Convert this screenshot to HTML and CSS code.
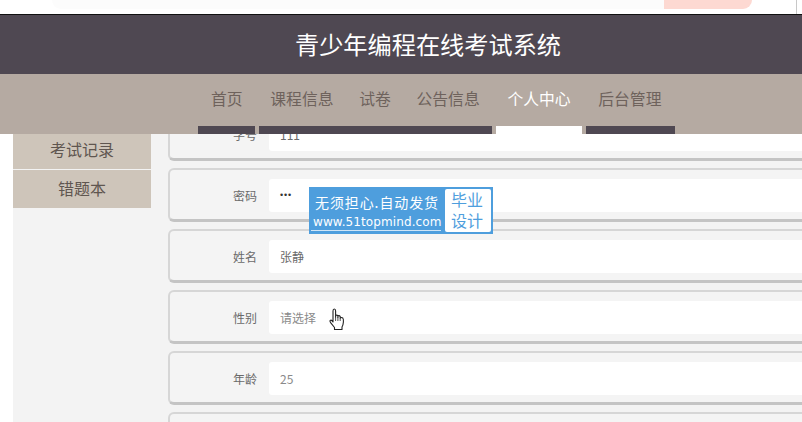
FILE: index.html
```html
<!DOCTYPE html>
<html lang="zh-CN">
<head>
  <meta charset="UTF-8">
  <title>青少年编程在线考试系统</title>
  <link rel="stylesheet" href="styles.css">
</head>
<body>
  <div class="top-strip">
    <div class="search-box"></div>
    <div class="search-btn"></div>
    <div class="strip-edge"></div>
  </div>

  <header>
    <h1>青少年编程在线考试系统</h1>
  </header>

  <nav>
    <ul>
      <li class="wide"><a href="#">首页</a></li>
      <li><a href="#">课程信息</a></li>
      <li><a href="#">试卷</a></li>
      <li class="wide"><a href="#">公告信息</a></li>
      <li class="wide"><a href="#" class="active">个人中心</a></li>
      <li><a href="#">后台管理</a></li>
    </ul>
    <div class="tabs">
      <span class="tab tab-a"></span>
      <span class="tab tab-b"></span>
      <span class="tab tab-c"></span>
      <span class="tab tab-d"></span>
    </div>
  </nav>

  <main>
    <aside>
      <a href="#" class="side-item">考试记录</a>
      <a href="#" class="side-item">错题本</a>
    </aside>
    <div class="form">
      <div class="form-row">
        <label>学号</label>
        <div class="field">111</div>
      </div>
      <div class="form-row">
        <label>密码</label>
        <div class="field field-pass">•••</div>
      </div>
      <div class="form-row">
        <label>姓名</label>
        <div class="field">张静</div>
      </div>
      <div class="form-row">
        <label>性别</label>
        <div class="field field-hint">请选择</div>
      </div>
      <div class="form-row">
        <label>年龄</label>
        <div class="field field-hint">25</div>
      </div>
      <div class="form-row">
        <div class="field field-last"></div>
      </div>
    </div>
  </main>

  <div class="stamp">
    <div class="stamp-left">
      <div class="stamp-title">无须担心.自动发货</div>
      <div class="stamp-url">www.51topmind.com</div>
    </div>
    <div class="stamp-right">毕业<br>设计</div>
  </div>

  <svg class="cursor" width="18" height="23" viewBox="0 0 18 23">
    <path d="M5 14 L5 3 Q5 1 6.3 1 Q7.6 1 7.6 3 L7.6 9 L7.6 7.5 Q8.8 6.6 9.9 7.6 L9.9 9.5 L9.9 8 Q11.2 7.2 12.2 8.3 L12.2 10 Q13.6 8.9 14.8 10 Q15.6 11 15.4 14 Q15.2 17 14 19 L14 21.5 L6.5 21.5 L6.5 19.5 L2.6 14.6 Q1.3 12.8 2.6 12.2 Q3.8 11.8 5 14 Z" fill="#fff" stroke="#222" stroke-width="1.1" stroke-linejoin="round"/>
    <path d="M7.6 9 L7.6 13 M9.9 9.5 L9.9 13 M12.2 10 L12.2 13" fill="none" stroke="#222" stroke-width="0.8"/>
  </svg>
</body>
</html>
```

FILE: styles.css
```css
html, body {
  height: 100%;
}
body {
  margin: 0;
  height: 422px;
  overflow: hidden;
  position: relative;
  display: flex;
  flex-direction: column;
  background: #fff;
  font-family: "Noto Sans CJK SC", "Liberation Sans", sans-serif;
  color: #666;
}
.top-strip {
  height: 14px;
  flex: none;
  display: flex;
  align-items: flex-start;
  padding-left: 52px;
  background: #fff;
}
.search-box {
  width: 612px;
  height: 9px;
  background: #fcfcfc;
  border-bottom-left-radius: 10px;
}
.search-btn {
  width: 88px;
  height: 9px;
  background: #fdd9d2;
  border-bottom-right-radius: 14px;
}
.strip-edge {
  width: 1px;
  height: 14px;
  margin-left: 44px;
  background: #c8c8c8;
}
header {
  flex: none;
  height: 59px;
  border-top: 1px solid #111;
  padding-left: 54px;
  display: flex;
  justify-content: center;
  background: #4f4852;
}
header h1 {
  margin: 0;
  font-size: 24.2px;
  line-height: 58px;
  font-weight: 400;
  color: #fff;
}
nav {
  flex: none;
  height: 60px;
  display: flex;
  flex-direction: column;
  justify-content: space-between;
  background: #b5aaa2;
}
nav ul {
  list-style: none;
  margin: 0;
  padding: 13px 0 0 211px;
  display: flex;
  gap: 25.7px;
}
nav ul li.wide {
  margin-right: 2px;
}
nav ul li a {
  text-decoration: none;
  font-size: 15.8px;
  line-height: 24px;
  display: block;
  color: #6e625c;
}
nav ul li a.active {
  color: #fff;
}
.tabs {
  height: 8px;
  padding-left: 198px;
  display: flex;
  gap: 4px;
}
.tab {
  height: 8px;
  background: #4f4852;
}
.tab-a {
  width: 57px;
}
.tab-b {
  width: 233px;
}
.tab-c {
  width: 86px;
  background: #fff;
}
.tab-d {
  width: 89px;
}
main {
  flex: 1;
  min-height: 0;
  margin-left: 13px;
  display: flex;
  gap: 17px;
  overflow: hidden;
  background: #f3f3f3;
}
aside {
  flex: none;
  width: 138px;
  margin-top: -3px;
  display: flex;
  flex-direction: column;
  gap: 1px;
}
.side-item {
  height: 38px;
  line-height: 36px;
  text-align: center;
  text-decoration: none;
  font-size: 16px;
  color: #5f5650;
  background: #cec5ba;
}
.form {
  flex: none;
  width: 700px;
  margin-top: -27px;
  display: flex;
  flex-direction: column;
  gap: 7px;
}
.form-row {
  flex: none;
  height: 54px;
  box-sizing: border-box;
  padding-top: 9px;
  display: flex;
  gap: 12px;
  background: #f4f4f4;
  border: 2px solid #d6d6d6;
  border-bottom: 3px solid #c4c4c4;
  border-radius: 6px;
}
.form-row label {
  width: 87px;
  line-height: 33px;
  text-align: right;
  font-size: 12px;
  color: #6a6a6a;
}
.field {
  flex: 1;
  height: 33px;
  padding-left: 11px;
  line-height: 33px;
  font-size: 12px;
  color: #6a6a6a;
  background: #fff;
  border-radius: 3px;
}
.field-pass {
  font-family: "Liberation Sans", sans-serif;
  font-size: 9px;
  letter-spacing: 0.8px;
  color: #333;
}
.field-hint {
  color: #8a8a8a;
}
.field-last {
  margin-left: 99px;
}
.stamp {
  position: absolute;
  left: 309px;
  top: 187px;
  width: 184px;
  height: 47px;
  box-sizing: border-box;
  padding: 2px;
  display: flex;
  justify-content: space-between;
  background: #4e9edd;
}
.stamp-left {
  color: #fff;
  white-space: nowrap;
}
.stamp-title {
  padding-left: 4px;
  font-size: 14px;
  line-height: 26px;
  letter-spacing: 0.9px;
}
.stamp-url {
  padding-left: 2px;
  font-family: "DejaVu Sans", sans-serif;
  font-size: 12px;
  line-height: 15px;
  letter-spacing: 0.1px;
  border-bottom: 1px solid #cfe5f6;
}
.stamp-right {
  width: 44px;
  padding-right: 2px;
  text-align: center;
  font-size: 16px;
  line-height: 21px;
  color: #4e9edd;
  background: #fff;
  border-radius: 2px;
}
.cursor {
  position: absolute;
  left: 328px;
  top: 308px;
}
```
